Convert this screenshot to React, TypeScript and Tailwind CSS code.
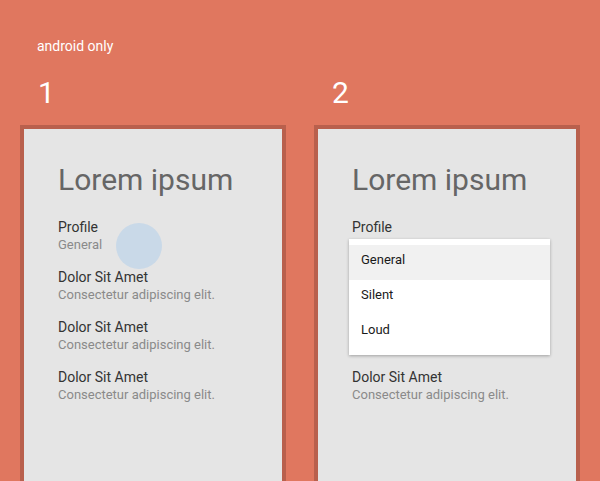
import React from "react";

// --- Data ---
const rows = [
  { title: "Profile", sub: "General" },
  { title: "Dolor Sit Amet", sub: "Consectetur adipiscing elit." },
  { title: "Dolor Sit Amet", sub: "Consectetur adipiscing elit." },
  { title: "Dolor Sit Amet", sub: "Consectetur adipiscing elit." },
];

const options = ["General", "Silent", "Loud"];

function Screen({ variant }: { variant: 1 | 2 }) {
  return (
    <div className="relative h-[400px] w-[266px] border-4 border-[#b9604d] bg-[#e5e5e5] pl-[34px] pt-[32px]">
      <h1 className="text-[30px] leading-[38px] text-[#666666]">Lorem ipsum</h1>

      <ul className="mt-[20px] flex flex-col gap-4">
        {rows.map((row, i) => {
          // rows hidden behind the open spinner on screen 2
          const covered = variant === 2 && (i === 1 || i === 2);
          return (
            <li key={i} className={covered ? "invisible" : ""}>
              <p className="text-[14px] leading-[17px] text-[#333333]">{row.title}</p>
              <p
                className={
                  variant === 2 && i === 0
                    ? "invisible text-[13px] leading-[17px] text-[#8a8a8a]"
                    : "text-[13px] leading-[17px] text-[#8a8a8a]"
                }
              >
                {row.sub}
              </p>
            </li>
          );
        })}
      </ul>

      {/* touch ripple */}
      {variant === 1 && (
        <div className="absolute left-[92px] top-[94px] h-[46px] w-[46px] rounded-full bg-[#c9d9e8]" />
      )}

      {/* open spinner */}
      {variant === 2 && (
        <div className="absolute left-[31px] top-[110px] w-[201px] bg-white pb-[5px] pt-[6px] shadow-[0_1px_3px_rgba(0,0,0,0.3)]">
          {options.map((opt, i) => (
            <div
              key={opt}
              className={
                i === 0
                  ? "flex h-[35px] items-center bg-[#f1f1f1] pb-[6px] pl-[12px] text-[13px] text-[#1a1a1a]"
                  : "flex h-[35px] items-center pb-[6px] pl-[12px] text-[13px] text-[#1a1a1a]"
              }
            >
              {opt}
            </div>
          ))}
        </div>
      )}
    </div>
  );
}

export default function App() {
  return (
    <div className="h-[481px] w-full overflow-hidden bg-[#e0775f] pt-[38px] font-['Roboto',sans-serif]">
      <p className="pl-[37px] text-[14px] leading-[17px] text-white">android only</p>

      <div className="mt-[20px] flex gap-[28px] pl-[20px]">
        {[1, 2].map((n) => (
          <div key={n} className="flex flex-col">
            <span className="pl-[18px] text-[30px] leading-[36px] text-white">{n}</span>
            <div className="mt-[14px]">
              <Screen variant={n as 1 | 2} />
            </div>
          </div>
        ))}
      </div>
    </div>
  );
}
